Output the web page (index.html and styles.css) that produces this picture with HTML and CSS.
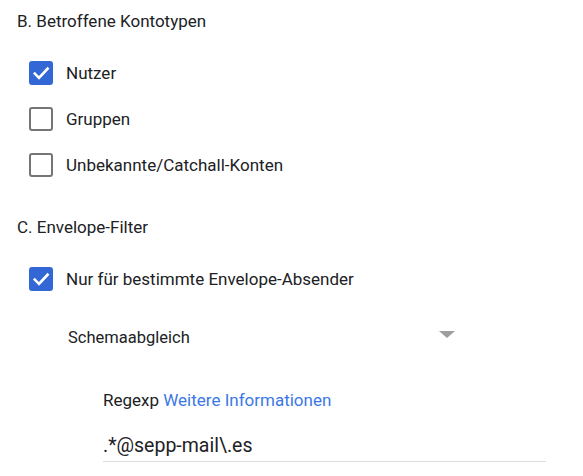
FILE: index.html
```html
<!DOCTYPE html>
<html lang="de">
<head>
<meta charset="utf-8">
<link rel="stylesheet" href="styles.css">
</head>
<body>
<div class="page">
  <div class="section-title title-b">B. Betroffene Kontotypen</div>
  <div class="options">
    <label class="option">
      <span class="box checked"><svg viewBox="0 0 24 24" width="24" height="24"><path d="M5.8 12.6l4.2 4.3 8.6-9.2" fill="none" stroke="#fff" stroke-width="2.6" stroke-linecap="square"/></svg></span>
      <span class="label">Nutzer</span>
    </label>
    <label class="option">
      <span class="box"></span>
      <span class="label">Gruppen</span>
    </label>
    <label class="option">
      <span class="box"></span>
      <span class="label">Unbekannte/Catchall-Konten</span>
    </label>
  </div>
  <div class="section-title title-c">C. Envelope-Filter</div>
  <div class="options">
    <label class="option">
      <span class="box checked"><svg viewBox="0 0 24 24" width="24" height="24"><path d="M5.8 12.6l4.2 4.3 8.6-9.2" fill="none" stroke="#fff" stroke-width="2.6" stroke-linecap="square"/></svg></span>
      <span class="label">Nur für bestimmte Envelope-Absender</span>
    </label>
  </div>
  <div class="select">
    <span class="select-text">Schemaabgleich</span>
    <span class="arrow"></span>
  </div>
  <div class="field">
    <div class="field-label">Regexp <a class="link" href="#">Weitere Informationen</a></div>
    <div class="input">.*@sepp-mail\.es</div>
  </div>
</div>
</body>
</html>
```
FILE: styles.css
```css
html, body {
  margin: 0;
  padding: 0;
  background: #fff;
}
body {
  font-family: Roboto, "Liberation Sans", sans-serif;
  color: #202124;
  width: 583px;
  height: 476px;
  overflow: hidden;
}
.page {
  padding: 10px 0 0 17px;
}
.section-title {
  font-size: 17px;
  line-height: 22px;
}
.title-c {
  margin-top: 39px;
}
.options {
  display: flex;
  flex-direction: column;
  gap: 22px;
  margin-top: 29px;
  padding-left: 12px;
}
.option {
  display: flex;
  align-items: center;
  gap: 13px;
  height: 24px;
}
.box {
  width: 24px;
  height: 24px;
  box-sizing: border-box;
  border: 2px solid #757575;
  border-radius: 3px;
  display: block;
  flex: none;
}
.box.checked {
  border: none;
  background: #3367d6;
}
.box svg {
  display: block;
}
.label {
  font-size: 17px;
}
.select {
  display: flex;
  justify-content: space-between;
  align-items: flex-start;
  width: 387px;
  margin: 37px 0 0 51px;
}
.select-text {
  font-size: 16.5px;
  line-height: 20px;
}
.arrow {
  width: 0;
  height: 0;
  margin-top: 3px;
  border-left: 8px solid transparent;
  border-right: 8px solid transparent;
  border-top: 7px solid #9e9e9e;
}
.field {
  margin: 42px 0 0 86px;
  width: 443px;
}
.field-label {
  font-size: 17px;
  line-height: 20px;
}
.link {
  color: #3b78e7;
  text-decoration: none;
}
.input {
  margin-top: 23px;
  font-size: 19.5px;
  line-height: 26px;
  padding-bottom: 2px;
  border-bottom: 1px solid #dcdcdc;
}
```
